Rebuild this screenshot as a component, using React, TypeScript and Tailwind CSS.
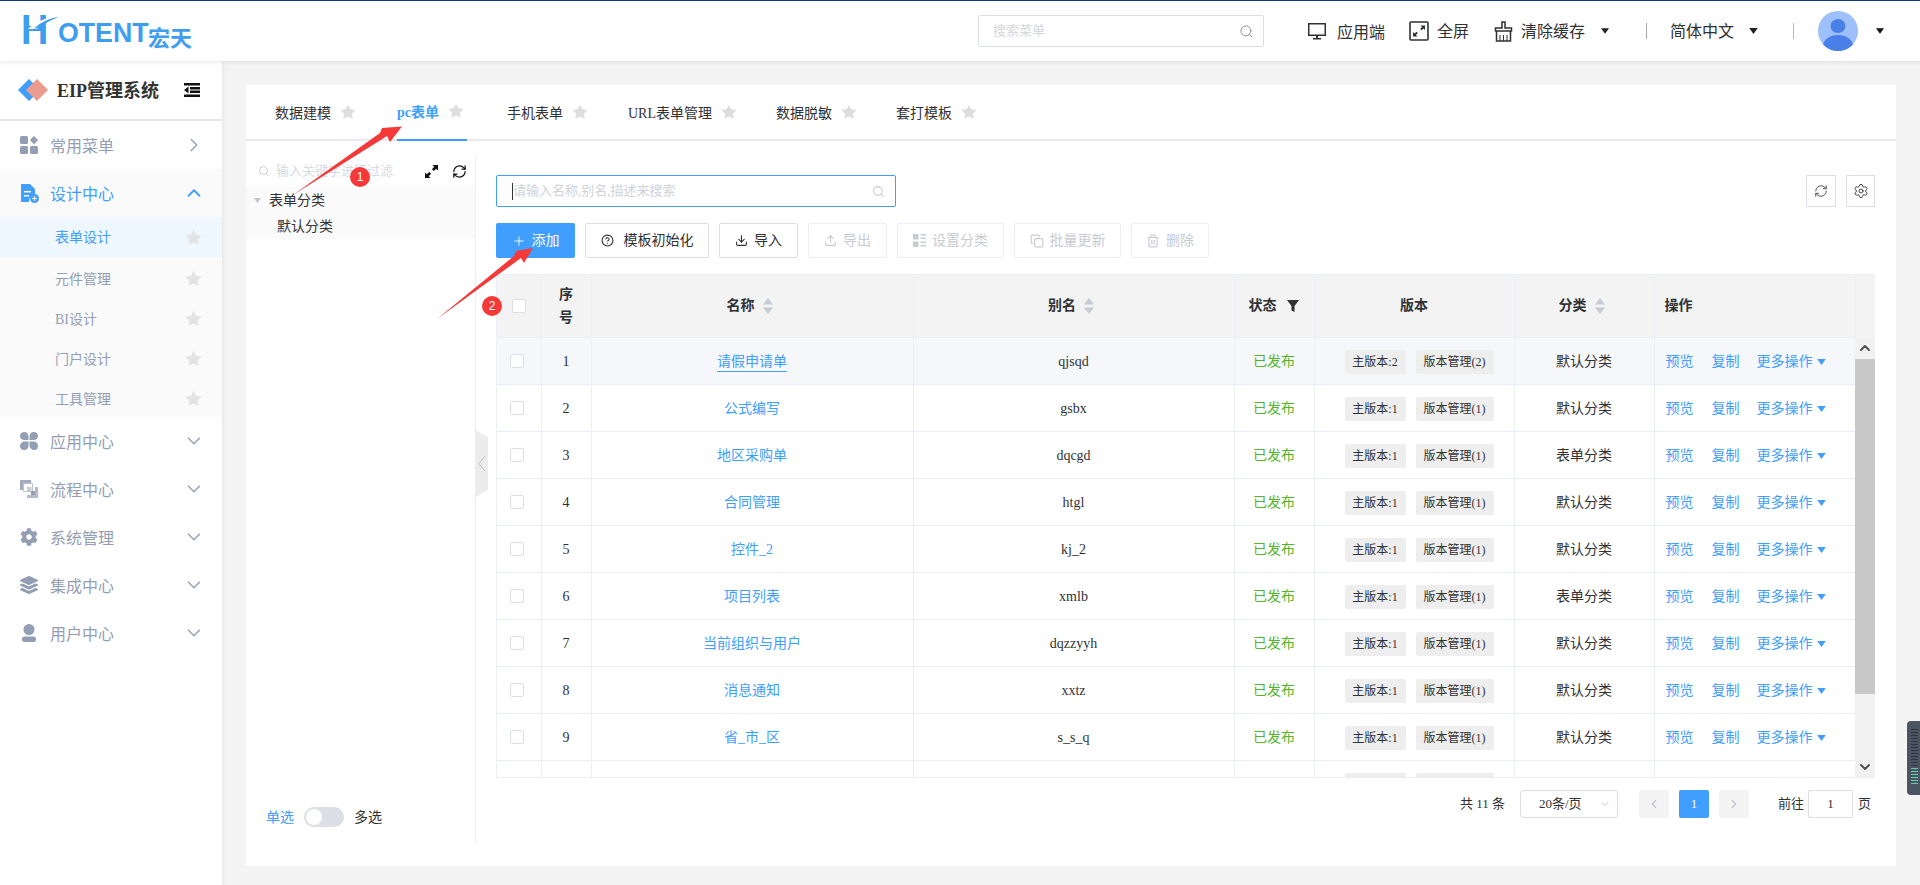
import { ChevronDown, ChevronLeft, ChevronRight, ChevronUp, CircleHelp, Copy, Download, Plus, RefreshCw, Search, Settings, Trash2, Upload } from "lucide-react";
import { FaCog, FaLayerGroup } from "react-icons/fa";

const rows = [
  { no: 1, name: "请假申请单", alias: "qjsqd", major: 2, manage: 2, cat: "默认分类" },
  { no: 2, name: "公式编写", alias: "gsbx", major: 1, manage: 1, cat: "默认分类" },
  { no: 3, name: "地区采购单", alias: "dqcgd", major: 1, manage: 1, cat: "表单分类" },
  { no: 4, name: "合同管理", alias: "htgl", major: 1, manage: 1, cat: "默认分类" },
  { no: 5, name: "控件_2", alias: "kj_2", major: 1, manage: 1, cat: "默认分类" },
  { no: 6, name: "项目列表", alias: "xmlb", major: 1, manage: 1, cat: "表单分类" },
  { no: 7, name: "当前组织与用户", alias: "dqzzyyh", major: 1, manage: 1, cat: "默认分类" },
  { no: 8, name: "消息通知", alias: "xxtz", major: 1, manage: 1, cat: "默认分类" },
  { no: 9, name: "省_市_区", alias: "s_s_q", major: 1, manage: 1, cat: "默认分类" },
];

const tabs = [
  { label: "数据建模", gap: "mr-[38px]" },
  { label: "pc表单", gap: "mr-[40px]" },
  { label: "手机表单", gap: "mr-[37px]" },
  { label: "URL表单管理", gap: "mr-[36px]" },
  { label: "数据脱敏", gap: "mr-[36px]" },
  { label: "套打模板", gap: "" },
];
const subMenus = ["表单设计", "元件管理", "BI设计", "门户设计", "工具管理"];

function Star({ className }: { className: string }) {
  return (
    <svg viewBox="0 0 24 24" className={className} fill="currentColor">
      <path d="M12 1l3.500 7 8 1.100-5.800 5.500 1.400 8L12 18.800 4.900 22.600l1.400-8L.5 9.100l8-1.100z" />
    </svg>
  );
}

function Caret({ className }: { className: string }) {
  return (
    <svg viewBox="0 0 10 7" className={className} fill="currentColor">
      <path d="M0 0h10L5 7z" />
    </svg>
  );
}

function SortIcon() {
  return (
    <svg viewBox="0 0 10 16" className="ml-[8px] h-[16px] w-[10px] text-[#c6cad2]" fill="currentColor">
      <path d="M5 0l5 6.500H0zM5 16L0 9.500h10z" />
    </svg>
  );
}

function MenuIcon({ kind }: { kind: string }) {
  if (kind === "common")
    return (
      <svg viewBox="0 0 18 18" className="h-[18px] w-[18px]" fill="currentColor">
        <rect x="0" y="0" width="8" height="8" rx="1.500" />
        <rect x="0" y="10" width="8" height="8" rx="1.500" />
        <rect x="10" y="10" width="8" height="8" rx="1.500" />
        <path d="M14 0l4 4-4 4.500L10 4z" />
      </svg>
    );
  if (kind === "design")
    return (
      <svg viewBox="0 0 19 19" className="h-[19px] w-[19px]" fill="currentColor">
        <path d="M1 0h9l5 5v6a6 6 0 0 0-6 7H1z" />
        <rect x="4" y="7" width="7" height="1.500" fill="#fafafa" />
        <rect x="4" y="11" width="5" height="1.500" fill="#fafafa" />
        <circle cx="14.500" cy="14.500" r="4.500" />
        <path d="M14 12h1v2h2v1h-2v2h-1v-2h-2v-1h2z" fill="#fff" />
      </svg>
    );
  if (kind === "app")
    return (
      <svg viewBox="0 0 18 18" className="h-[18px] w-[18px]" fill="currentColor">
        <path d="M4 0c3 0 4.500 2 4.500 4.300V8H4.300C2 8 0 6.500 0 4s2-4 4-4zM14 0c2 0 4 1.500 4 4s-2 4-4.300 4H9.500V4.300C9.500 2 11 0 14 0zM4.300 9.500h4.200v4.200C8.500 16 7 18 4 18s-4-2-4-4 2-4.500 4.300-4.500zM9.500 9.500h4.200C16 9.500 18 11 18 14s-2 4-4 4-4.500-2-4.500-4.300z" />
      </svg>
    );
  if (kind === "flow")
    return (
      <svg viewBox="0 0 18 18" className="h-[18px] w-[18px]">
        <path d="M0 0h11v3H3v7H0z" fill="currentColor" opacity=".85" />
        <rect x="3.500" y="3.500" width="9" height="8" fill="none" stroke="currentColor" strokeWidth="1" opacity=".6" />
        <rect x="7" y="7" width="4.500" height="4" fill="currentColor" opacity=".5" />
        <path d="M18 7v11H7v-3h8V7z" fill="currentColor" opacity=".7" />
        <rect x="11" y="11" width="4" height="4" fill="currentColor" />
      </svg>
    );
  if (kind === "system") return <FaCog className="h-[18px] w-[18px]" />;
  if (kind === "integrate") return <FaLayerGroup className="h-[18px] w-[18px]" />;
  return (
    <svg viewBox="0 0 18 18" className="h-[18px] w-[18px]" fill="currentColor">
      <circle cx="9" cy="5.500" r="5.500" />
      <rect x="2" y="12.500" width="14" height="5.500" rx="2.500" />
    </svg>
  );
}

function SideRow({ label, icon, open }: { label: string; icon: string; open?: boolean }) {
  return (
    <div className={`flex h-[48px] items-center pl-[20px] ${open ? "text-[#409eff]" : "text-[#939eb4]"}`}>
      <span className="flex w-[30px]">
        <MenuIcon kind={icon} />
      </span>
      <span className="w-[133px] pt-[3px] text-base">{label}</span>
      {open ? (
        <ChevronUp className="h-[22px] w-[22px]" strokeWidth={2} />
      ) : icon === "common" ? (
        <ChevronRight className="h-[22px] w-[22px] text-[#9aa5ba]" strokeWidth={1.800} />
      ) : (
        <ChevronDown className="h-[22px] w-[22px] text-[#9aa5ba]" strokeWidth={1.800} />
      )}
    </div>
  );
}

function Sidebar() {
  return (
    <aside className="z-10 h-full w-[222px] shrink-0 bg-white shadow-[2px_0_5px_rgba(0,0,0,0.05)]">
      <div className="flex h-[60px] items-center border-b-2 border-[#e6e6e6] pl-[18px]">
        <svg viewBox="0 0 30 22" className="h-[22px] w-[30px]">
          <path d="M11 0l11 11-11 11L0 11z" fill="#3f9dfb" />
          <path d="M19 0l11 11-11 11L8 11z" fill="#ec9c8e" />
        </svg>
        <span className="ml-[9px] w-[103px] whitespace-nowrap pt-[2px] text-lg font-bold text-[#333]">EIP管理系统</span>
        <svg viewBox="0 0 16 14" className="ml-[24px] h-[14px] w-[16px]" fill="#111">
          <rect x="0" y="0" width="16" height="2.500" />
          <rect x="6" y="4" width="10" height="2.500" />
          <rect x="6" y="7.500" width="10" height="2.500" />
          <rect x="0" y="11.500" width="16" height="2.500" />
          <path d="M4.500 3.500v7L0 7z" />
        </svg>
      </div>
      <SideRow label="常用菜单" icon="common" />
      <div className="h-[248px] bg-[#fafafa]">
        <SideRow label="设计中心" icon="design" open />
        {subMenus.map((m, i) => (
          <div
            key={m}
            className={`flex h-[40px] items-center pl-[55px] text-sm ${i === 0 ? "mb-[1.5px] bg-[#eef6fe] text-[#409eff]" : "text-[#939eb4]"}`}
          >
            <span className="w-[130px] pt-[2px]">{m}</span>
            <Star className="h-[17px] w-[17px] text-[#e3e3e3]" />
          </div>
        ))}
      </div>
      <SideRow label="应用中心" icon="app" />
      <SideRow label="流程中心" icon="flow" />
      <SideRow label="系统管理" icon="system" />
      <SideRow label="集成中心" icon="integrate" />
      <SideRow label="用户中心" icon="user" />
    </aside>
  );
}

function Header() {
  return (
    <header className="relative z-20 flex h-[61px] items-center border-t border-[#123a7c] bg-white text-[#303133] shadow-[0_1px_4px_rgba(0,0,0,0.1)]">
      <div className="relative ml-[24px] flex h-[40px] w-[168px] items-end text-[#3f9df0]">
        <span className="absolute left-[-3px] top-[-5px] origin-left scale-x-90 font-[family-name:Liberation_Sans,sans-serif] text-[42px] font-bold leading-[48px]">H</span>
        <svg viewBox="0 0 34 16" className="absolute left-[2px] top-[3px] h-[16px] w-[34px]">
          <path d="M2 15C10 7 22 3 33 2 24 5 17 8 11 15z" fill="#fff" />
          <path d="M8 15C14 8 24 4 33 3 25 6 19 9 14 13z" fill="#3f9df0" />
        </svg>
        <span className="ml-[34px] origin-left scale-x-[0.99] font-[family-name:Liberation_Sans,sans-serif] text-[27px] font-bold leading-[36px]">OTENT</span>
        <span className="absolute left-[124px] bottom-[-2px] font-[family-name:Noto_Sans_CJK_SC,sans-serif] text-[22px] font-bold leading-[34px]">宏天</span>
      </div>
      <div className="ml-[786px] flex h-[32px] w-[286px] items-center rounded-[2px] border border-[#dcdfe6] pl-[14px] pr-[9px]">
        <input readOnly placeholder="搜索菜单" className="min-w-0 flex-1 bg-transparent text-[13px] outline-none placeholder:text-[#d3d6dc]" />
        <Search className="h-[15px] w-[15px] text-[#8b8b8b]" strokeWidth={1.500} />
      </div>
      <svg viewBox="0 0 18 17" className="ml-[44px] h-[17px] w-[18px]">
        <rect x="0.750" y="0.750" width="16.500" height="11.500" fill="none" stroke="#303133" strokeWidth="1.500" />
        <path d="M8 13h2v2h3v1.500H5V15h3z" fill="#303133" />
      </svg>
      <span className="ml-[11px] w-[48px] pt-[4px] text-base">应用端</span>
      <svg viewBox="0 0 20 20" className="ml-[24px] h-[20px] w-[20px]">
        <rect x="1" y="1" width="18" height="18" rx="1" fill="none" stroke="#303133" strokeWidth="1.600" />
        <path d="M11.500 4.500H16V9l-1.600-1.600-1.900 1.900-1.300-1.300 1.900-1.900zM8.500 15.500H4V11l1.600 1.600 1.900-1.900 1.300 1.300-1.900 1.900z" fill="#303133" />
      </svg>
      <span className="ml-[8px] w-[32px] pt-[2px] text-base">全屏</span>
      <svg viewBox="0 0 19 21" className="ml-[25px] h-[21px] w-[19px]" fill="none" stroke="#303133" strokeWidth="1.500">
        <path d="M8 1h3v6h6.500v3h-16V7H8z" />
        <path d="M2.500 10v10h14V10" />
        <path d="M6 14v6M9.500 14v6M13 14v6" strokeWidth="1" />
      </svg>
      <span className="ml-[8px] w-[64px] pt-[2px] text-base">清除缓存</span>
      <Caret className="ml-[16px] h-[6px] w-[8px] text-[#222]" />
      <span className="ml-[37px] h-[16px] w-px bg-[#aaa]" />
      <span className="ml-[23px] w-[64px] pt-[1px] text-base">简体中文</span>
      <Caret className="ml-[15px] h-[6px] w-[9px] text-[#222]" />
      <span className="ml-[35px] h-[16px] w-px bg-[#bbb]" />
      <svg viewBox="0 0 40 40" className="ml-[24px] h-[40px] w-[40px]">
        <defs>
          <clipPath id="av">
            <circle cx="20" cy="20" r="20" />
          </clipPath>
        </defs>
        <circle cx="20" cy="20" r="20" fill="#9dc0fb" />
        <ellipse cx="20" cy="15" rx="7.500" ry="7" fill="#4a7fe8" />
        <ellipse cx="20" cy="35" rx="15" ry="11" fill="#4a7fe8" clipPath="url(#av)" />
      </svg>
      <Caret className="ml-[18px] h-[6px] w-[8px] text-[#111]" />
    </header>
  );
}

function ToolButton({ label, width, icon, disabled }: { label: string; width: string; icon: React.ReactNode; disabled?: boolean }) {
  return (
    <button
      type="button"
      className={`flex h-[35px] items-center justify-center gap-[6px] rounded-[2px] border text-sm ${width} ${
        disabled ? "border-[#ebeef5] text-[#c8cbd2]" : "border-[#dcdfe6] text-[#303133]"
      }`}
    >
      {icon}
      {label}
    </button>
  );
}

function Check({ className }: { className?: string }) {
  return <span className={`block h-[14px] w-[14px] rounded-[2px] border border-[#dcdfe6] bg-white ${className ?? ""}`} />;
}

function Tags({ major, manage }: { major: number; manage: number }) {
  return (
    <span className="flex gap-[10px] pl-[30px] text-xs">
      <span className="flex h-[24px] w-[61px] items-center justify-center rounded-[2px] bg-[#eeeeee]">主版本:{major}</span>
      <span className="flex h-[24px] w-[78px] items-center justify-center rounded-[2px] bg-[#eeeeee]">版本管理({manage})</span>
    </span>
  );
}

function Table() {
  return (
    <div className="relative mt-[16px] h-[504px] w-[1379px] overflow-hidden border-b border-l border-t border-[#ebeef5] text-sm text-[#303133]">
      <table className="w-[1358px] table-fixed border-collapse">
        <colgroup>
          <col className="w-[44px]" />
          <col className="w-[50px]" />
          <col className="w-[322px]" />
          <col className="w-[321px]" />
          <col className="w-[80px]" />
          <col className="w-[200px]" />
          <col className="w-[140px]" />
          <col className="w-[201px]" />
        </colgroup>
        <thead>
          <tr className="h-[62px] bg-[#f3f3f4] font-bold">
            <th className="border-r border-[#ebeef5]">
              <Check className="ml-[15px]" />
            </th>
            <th className="border-r border-[#ebeef5] leading-[23px]">
              序<br />号
            </th>
            <th className="border-r border-[#ebeef5]">
              <span className="flex items-center justify-center pr-[5px]">
                名称
                <SortIcon />
              </span>
            </th>
            <th className="border-r border-[#ebeef5]">
              <span className="flex items-center justify-center pr-[5px]">
                别名
                <SortIcon />
              </span>
            </th>
            <th className="border-r border-[#ebeef5]">
              <span className="flex items-center pl-[14px]">
                状态
                <svg viewBox="0 0 12 12" className="ml-[10px] h-[12px] w-[12px]" fill="#303133">
                  <path d="M0 0h12L7.500 6v6l-3-1.500V6z" />
                </svg>
              </span>
            </th>
            <th className="border-r border-[#ebeef5]">版本</th>
            <th className="border-r border-[#ebeef5]">
              <span className="flex items-center justify-center pr-[5px]">
                分类
                <SortIcon />
              </span>
            </th>
            <th className="pl-[10px] text-left">操作</th>
          </tr>
        </thead>
        <tbody>
          {rows.map((r) => (
            <tr key={r.no} className={`h-[47px] border-t border-[#ebeef5] [&>td]:pt-[2px] ${r.no === 1 ? "bg-[#f5f7fa]" : ""}`}>
              <td className="border-r border-[#ebeef5]">
                <Check className="-mt-[2px] ml-[13px]" />
              </td>
              <td className="border-r border-[#ebeef5] text-center">{r.no}</td>
              <td className="border-r border-[#ebeef5] text-center text-[#409eff]">
                <span className={r.no === 1 ? "border-b border-[#409eff] pb-[2px]" : ""}>{r.name}</span>
              </td>
              <td className="border-r border-[#ebeef5] text-center">{r.alias}</td>
              <td className="border-r border-[#ebeef5] text-center text-[#52b52a]">已发布</td>
              <td className="border-r border-[#ebeef5]">
                <Tags major={r.major} manage={r.manage} />
              </td>
              <td className="border-r border-[#ebeef5] text-center">{r.cat}</td>
              <td className="pl-[11px] text-[#409eff]">
                <span className="flex items-center">
                  预览
                  <span className="ml-[18px]">复制</span>
                  <span className="ml-[17px]">更多操作</span>
                  <Caret className="ml-[4px] h-[6px] w-[9px]" />
                </span>
              </td>
            </tr>
          ))}
          <tr className="h-[47px] border-t border-[#ebeef5] [&>td]:pt-[2px]">
            <td className="border-r border-[#ebeef5]">
              <Check className="-mt-[2px] ml-[13px]" />
            </td>
            <td className="border-r border-[#ebeef5]" />
            <td className="border-r border-[#ebeef5]" />
            <td className="border-r border-[#ebeef5]" />
            <td className="border-r border-[#ebeef5] text-center text-[#52b52a]">已发布</td>
            <td className="border-r border-[#ebeef5]">
              <Tags major={1} manage={1} />
            </td>
            <td className="border-r border-[#ebeef5] text-center">默认分类</td>
            <td />
          </tr>
        </tbody>
      </table>
      <div className="absolute right-0 top-0 h-[62px] w-[20px] border-l border-[#ebeef5] bg-[#f3f3f4]" />
      <div className="absolute right-0 top-[62px] flex h-[442px] w-[20px] flex-col items-center bg-[#f1f1f1]">
        <ChevronUp className="mt-[3px] h-[16px] w-[16px] text-[#505050]" strokeWidth={3} />
        <div className="mt-[3px] h-[335px] w-full bg-[#c8c8c8]" />
        <ChevronDown className="mt-[65px] h-[16px] w-[16px] text-[#505050]" strokeWidth={3} />
      </div>
    </div>
  );
}

function Pagination() {
  return (
    <div className="mt-[12px] flex h-[28px] items-center text-[13px] text-[#303133]">
      <span className="ml-[964px] w-[44px] whitespace-nowrap">共 11 条</span>
      <span className="ml-[16px] flex h-[28px] w-[98px] items-center justify-between rounded-[3px] border border-[#dcdfe6] pl-[18px] pr-[6px]">
        20条/页
        <ChevronDown className="h-[12px] w-[12px] text-[#c0c4cc]" />
      </span>
      <span className="ml-[21px] flex h-[28px] w-[30px] items-center justify-center rounded-[2px] bg-[#f4f4f5]">
        <ChevronLeft className="h-[14px] w-[14px] text-[#c0c4cc]" />
      </span>
      <span className="ml-[10px] flex h-[28px] w-[30px] items-center justify-center rounded-[2px] bg-[#409eff] text-white">1</span>
      <span className="ml-[10px] flex h-[28px] w-[30px] items-center justify-center rounded-[2px] bg-[#f4f4f5]">
        <ChevronRight className="h-[14px] w-[14px] text-[#c0c4cc]" />
      </span>
      <span className="ml-[29px] w-[26px]">前往</span>
      <span className="ml-[4px] flex h-[28px] w-[45px] items-center justify-center rounded-[2px] border border-[#dcdfe6]">1</span>
      <span className="ml-[5px]">页</span>
    </div>
  );
}

function Annotations() {
  return (
    <>
      <svg viewBox="0 0 1920 885" className="pointer-events-none absolute inset-0 z-30 h-[885px] w-[1920px]" fill="#f53838">
        <polygon points="293,195 380,133 382,128 402,126.500 390,142 387,136" />
        <polygon points="437,319 514,256 516,251 533,248 524,263 521,258" />
      </svg>
      <span className="absolute left-[350px] top-[167px] z-30 flex h-[20px] w-[20px] items-center justify-center rounded-full bg-[#f53838] font-[family-name:Liberation_Sans,sans-serif] text-xs text-white">1</span>
      <span className="absolute left-[482px] top-[296px] z-30 flex h-[20px] w-[20px] items-center justify-center rounded-full bg-[#f53838] font-[family-name:Liberation_Sans,sans-serif] text-xs text-white">2</span>
    </>
  );
}

export default function App() {
  return (
    <div className="relative h-[885px] w-[1920px] overflow-hidden bg-[#f4f4f4] font-[family-name:Liberation_Serif,Noto_Sans_CJK_SC,serif]">
      <Header />
      <div className="flex h-[824px]">
        <Sidebar />
        <main className="relative ml-[24px] mt-[24px] h-[781px] w-[1650px] bg-white">
          <div className="flex h-[56px] border-b-2 border-[#e9e9ef] pl-[29px] text-sm text-[#303133]">
            {tabs.map((t) => (
              <div
                key={t.label}
                className={`flex h-[56px] items-center pt-[2px] ${t.gap} ${t.label === "pc表单" ? "border-b-2 border-[#409eff] font-bold text-[#409eff]" : ""}`}
              >
                {t.label}
                <Star className="ml-[9px] mr-[3px] mt-[-5px] h-[16px] w-[16px] text-[#dedede]" />
              </div>
            ))}
          </div>
          <div className="flex">
            <div className="mt-[14px] h-[688px] w-[230px] border-r border-[#ebeef5] text-sm text-[#303133]">
              <div className="flex h-[32px] items-center pl-[12px] pr-[8px]">
                <Search className="h-[12px] w-[12px] text-[#c8cbd2]" />
                <span className="ml-[6px] w-[149px] whitespace-nowrap text-[13px] text-[#d8dae0]">输入关键字进行过滤</span>
                <svg viewBox="0 0 14 14" className="h-[13px] w-[13px]" fill="#111">
                  <path d="M8 0h6v6l-2-2-2.500 2.500-2-2L10 2zM6 14H0V8l2 2 2.500-2.500 2 2L4 12z" />
                </svg>
                <RefreshCw className="ml-[14px] h-[15px] w-[15px] text-[#111]" strokeWidth={2} />
              </div>
              <div className="bg-[#fafafa]">
                <div className="flex h-[26px] items-center pl-[8px]">
                  <Caret className="h-[5px] w-[7px] text-[#c0c4cc]" />
                  <span className="ml-[8px] pt-[2px]">表单分类</span>
                </div>
                <div className="flex h-[26px] items-center pl-[31px] pt-[2px]">默认分类</div>
              </div>
              <div className="mt-[568px] flex h-[20px] items-center pl-[20px]">
                <span className="pt-[2px] text-[#409eff]">单选</span>
                <span className="ml-[10px] flex h-[20px] w-[40px] items-center rounded-full bg-[#dcdfe6] pl-[2px]">
                  <span className="h-[16px] w-[16px] rounded-full bg-white" />
                </span>
                <span className="ml-[10px] pt-[2px]">多选</span>
              </div>
            </div>
            <div className="pl-[20px] pt-[34px]">
              <div className="flex h-[32px] w-[1379px] items-center">
                <div className="relative flex h-[32px] w-[400px] items-center rounded-[2px] border border-[#409eff] pl-[16px] pr-[10px]">
                  <span className="absolute left-[15px] top-[7px] h-[17px] w-px bg-[#333]" />
                  <input readOnly placeholder="请输入名称,别名,描述来搜索" className="min-w-0 flex-1 bg-transparent text-[13px] outline-none placeholder:text-[#cfd2d8]" />
                  <Search className="h-[13px] w-[13px] text-[#c8cbd2]" />
                </div>
                <span className="ml-auto flex h-[32px] w-[30px] items-center justify-center border border-[#dcdfe6]">
                  <RefreshCw className="h-[14px] w-[14px] text-[#444]" strokeWidth={1.500} />
                </span>
                <span className="ml-[10px] flex h-[32px] w-[29px] items-center justify-center border border-[#dcdfe6]">
                  <Settings className="h-[16px] w-[16px] text-[#444]" strokeWidth={1.500} />
                </span>
              </div>
              <div className="mt-[16px] flex h-[35px] gap-[10px]">
                <button type="button" className="flex h-[35px] w-[79px] items-center justify-center gap-[6px] rounded-[2px] bg-[#409eff] text-sm text-white">
                  <Plus className="h-[14px] w-[14px]" strokeWidth={1.500} />
                  添加
                </button>
                <ToolButton label="模板初始化" width="w-[124px]" icon={<CircleHelp className="mr-[4px] h-[13px] w-[13px]" />} />
                <ToolButton label="导入" width="w-[79px]" icon={<Download className="h-[13px] w-[13px]" />} />
                <ToolButton label="导出" width="w-[79px]" disabled icon={<Upload className="h-[13px] w-[13px]" />} />
                <ToolButton
                  label="设置分类"
                  width="w-[107px]"
                  disabled
                  icon={
                    <svg viewBox="0 0 13 13" className="h-[13px] w-[13px]" fill="currentColor">
                      <rect x="0" y="0" width="5.500" height="5.500" />
                      <rect x="0" y="7.500" width="5.500" height="5.500" />
                      <path d="M7.500 0H13v1.500H7.500zM7.500 3.500H13V5H7.500zM7.500 7.500H13V9H7.500zM7.500 11H13v1.500H7.500z" />
                    </svg>
                  }
                />
                <ToolButton label="批量更新" width="w-[107px]" disabled icon={<Copy className="h-[14px] w-[14px]" />} />
                <ToolButton label="删除" width="w-[78px]" disabled icon={<Trash2 className="h-[14px] w-[14px]" />} />
              </div>
              <Table />
              <Pagination />
            </div>
          </div>
          <svg viewBox="0 0 12 67" className="absolute left-[230px] top-[345px] h-[67px] w-[12px]">
            <polygon points="0,0 12,7 12,60 0,67" fill="#ececec" />
            <path d="M9 26l-6 7.500 6 7.500" fill="none" stroke="#b9bcc2" strokeWidth="1" />
          </svg>
        </main>
      </div>
      <div className="absolute left-[1907px] top-[721px] flex h-[74px] w-[13px] flex-col gap-[2px] rounded-l-[4px] bg-[#4c5361] pl-[4px] pt-[8px]">
        {Array.from({ length: 19 }).map((_, i) => (
          <span key={i} className={`h-px w-[7px] ${i > 12 ? "bg-[#5fd0a8]" : "bg-[#2e333d]"}`} />
        ))}
      </div>
      <Annotations />
    </div>
  );
}
